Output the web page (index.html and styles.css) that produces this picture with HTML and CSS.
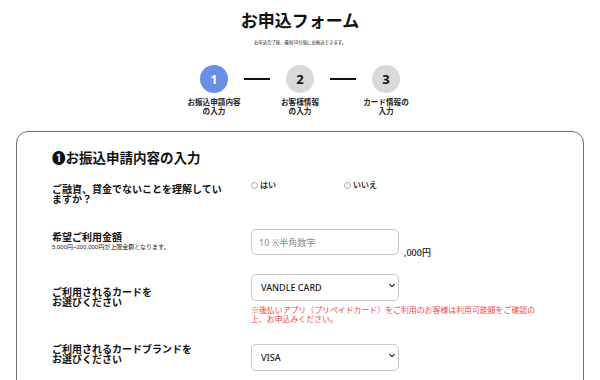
FILE: index.html
```html
<!DOCTYPE html>
<html lang="ja">
<head>
<meta charset="utf-8">
<title>お申込フォーム</title>
<link rel="stylesheet" href="styles.css">
</head>
<body>
<header class="head">
  <h1 class="title">お申込フォーム</h1>
  <p class="lead">お申込完了後、最短10分後にお振込できます。</p>
</header>

<ol class="steps">
  <li class="step is-current"><span class="step-num">1</span><span class="step-label">お振込申請内容<br>の入力</span></li>
  <li class="step-line" aria-hidden="true"></li>
  <li class="step"><span class="step-num">2</span><span class="step-label">お客様情報<br>の入力</span></li>
  <li class="step-line" aria-hidden="true"></li>
  <li class="step"><span class="step-num">3</span><span class="step-label">カード情報の<br>入力</span></li>
</ol>

<section class="card">
  <h2 class="card-title">❶お振込申請内容の入力</h2>
  <div class="rows">
    <div class="row row-consent">
      <div class="label">ご融資、貸金でないことを理解していますか？</div>
      <div class="radios">
        <label class="radio"><input type="radio" name="consent"><span>はい</span></label>
        <label class="radio"><input type="radio" name="consent"><span>いいえ</span></label>
      </div>
    </div>

    <div class="row">
      <div class="label">希望ご利用金額<small class="sub">5,000円~200,000円が上限金額となります。</small></div>
      <div class="amount">
        <input class="text-input" type="text" placeholder="10 ※半角数字">
        <span class="unit">,000円</span>
      </div>
    </div>

    <div class="row">
      <div class="label">ご利用されるカードを<br>お選びください</div>
      <div class="field">
        <span class="select-wrap">
          <select class="select"><option>VANDLE CARD</option></select>
          <svg class="chev" viewBox="0 0 8 6" width="6" height="5" aria-hidden="true"><path d="M1 1.5 L4 4.5 L7 1.5" fill="none" stroke="#222" stroke-width="1.6" stroke-linecap="round" stroke-linejoin="round"/></svg>
        </span>
        <p class="note">※後払いアプリ（プリペイドカード）をご利用のお客様は利用可能額をご確認の上、お申込みください。</p>
      </div>
    </div>

    <div class="row">
      <div class="label">ご利用されるカードブランドを<br>お選びください</div>
      <div class="field">
        <span class="select-wrap">
          <select class="select"><option>VISA</option></select>
          <svg class="chev" viewBox="0 0 8 6" width="6" height="5" aria-hidden="true"><path d="M1 1.5 L4 4.5 L7 1.5" fill="none" stroke="#222" stroke-width="1.6" stroke-linecap="round" stroke-linejoin="round"/></svg>
        </span>
      </div>
    </div>
  </div>
</section>
</body>
</html>
```

FILE: styles.css
```css
* { box-sizing: border-box; }

html, body {
  margin: 0;
  padding: 0;
  background: #fff;
}

body {
  font-family: "Noto Sans", "Noto Sans CJK JP", sans-serif;
  color: #111;
  width: 600px;
  overflow: hidden;
}

.head {
  padding-top: 10px;
  text-align: center;
}

.title {
  margin: 0;
  font-family: "Noto Sans CJK JP", sans-serif;
  font-size: 17px;
  line-height: 20px;
  font-weight: 700;
  color: #111;
}

.lead {
  margin: 10px 0 0;
  font-family: "Noto Sans CJK JP", sans-serif;
  font-size: 4.4px;
  line-height: 5px;
  color: #222;
}

.steps {
  list-style: none;
  margin: 20px 0 0;
  padding: 0;
  display: flex;
  justify-content: center;
  align-items: flex-start;
}

.step {
  width: 60px;
  display: flex;
  flex-direction: column;
  align-items: center;
}

.step-num {
  width: 28px;
  height: 28px;
  border-radius: 50%;
  background: #d9d9d9;
  color: #111;
  display: flex;
  align-items: center;
  justify-content: center;
  font-family: "Noto Sans", sans-serif;
  font-size: 13px;
  font-weight: 700;
}

.is-current .step-num {
  background: #6b8fe6;
  color: #fff;
}

.step-label {
  margin-top: 6px;
  font-family: "Liberation Sans", "Noto Sans CJK JP", sans-serif;
  font-size: 7.6px;
  line-height: 8.6px;
  font-weight: 700;
  color: #222;
  text-align: center;
  white-space: nowrap;
}

.step-line {
  width: 26px;
  height: 2px;
  margin-top: 13px;
  background: #111;
}

.card {
  margin: 15px 16px 0;
  border: 1px solid #707070;
  border-radius: 12px;
  padding: 18px 35px 40px;
  font-family: "Noto Sans CJK JP", sans-serif;
}

.card-title {
  margin: 0 0 16px;
  font-size: 13.5px;
  line-height: 14px;
  font-weight: 700;
  color: #111;
}

.rows {
  display: flex;
  flex-direction: column;
  gap: 17px;
}

.row {
  display: grid;
  grid-template-columns: 199px 1fr;
  align-items: center;
}

.row-consent {
  align-items: start;
  min-height: 32px;
}

.label {
  max-width: 176px;
  font-family: "Liberation Sans", "Noto Sans CJK JP", sans-serif;
  font-size: 10px;
  line-height: 10px;
  font-weight: 700;
  color: #111;
}

.row-consent .label {
  padding-top: 5px;
}

.sub {
  display: block;
  margin-top: 1px;
  font-family: "Liberation Sans", "Noto Sans CJK JP", sans-serif;
  font-size: 6px;
  line-height: 7px;
  font-weight: 400;
  color: #222;
  white-space: nowrap;
}

.radios {
  display: flex;
  align-items: center;
  padding-top: 1px;
}

.radio {
  display: inline-flex;
  align-items: center;
  gap: 2px;
  width: 93px;
  font-size: 8px;
  line-height: 8px;
  font-weight: 700;
  color: #333;
}

.radio input {
  appearance: none;
  -webkit-appearance: none;
  margin: 0;
  width: 7px;
  height: 7px;
  border: 1px solid #a5a5a5;
  border-radius: 50%;
  background: #fff;
}

.amount {
  display: flex;
  align-items: flex-end;
}

.text-input {
  width: 148px;
  height: 26px;
  margin: 0;
  padding: 0 7px;
  border: 1px solid #c9c9c9;
  border-radius: 5px;
  font-family: "Noto Sans", "Noto Sans CJK JP", sans-serif;
  font-size: 9px;
  color: #222;
  outline: none;
}

.text-input::placeholder {
  color: #8a8a8a;
}

.unit {
  margin-left: 5px;
  margin-bottom: -2px;
  font-family: "Noto Sans", "Noto Sans CJK JP", sans-serif;
  font-size: 9px;
  line-height: 9px;
  font-weight: 500;
  color: #111;
}

.field {
  display: flex;
  flex-direction: column;
  align-items: flex-start;
}

.select-wrap {
  position: relative;
  display: block;
  width: 148px;
  height: 27px;
}

.select {
  appearance: none;
  -webkit-appearance: none;
  width: 148px;
  height: 27px;
  margin: 0;
  padding: 0 9px;
  border: 1px solid #c9c9c9;
  border-radius: 5px;
  background: #fff;
  font-family: "Noto Sans", sans-serif;
  font-size: 9px;
  font-weight: 500;
  color: #1a1a1a;
}

.chev {
  position: absolute;
  right: 4px;
  top: 11px;
}

.note {
  margin: 8px 0 0;
  max-width: 292px;
  font-family: "Liberation Sans", "Noto Sans CJK JP", sans-serif;
  font-size: 7.9px;
  line-height: 8.8px;
  color: #f24a4a;
}
```
